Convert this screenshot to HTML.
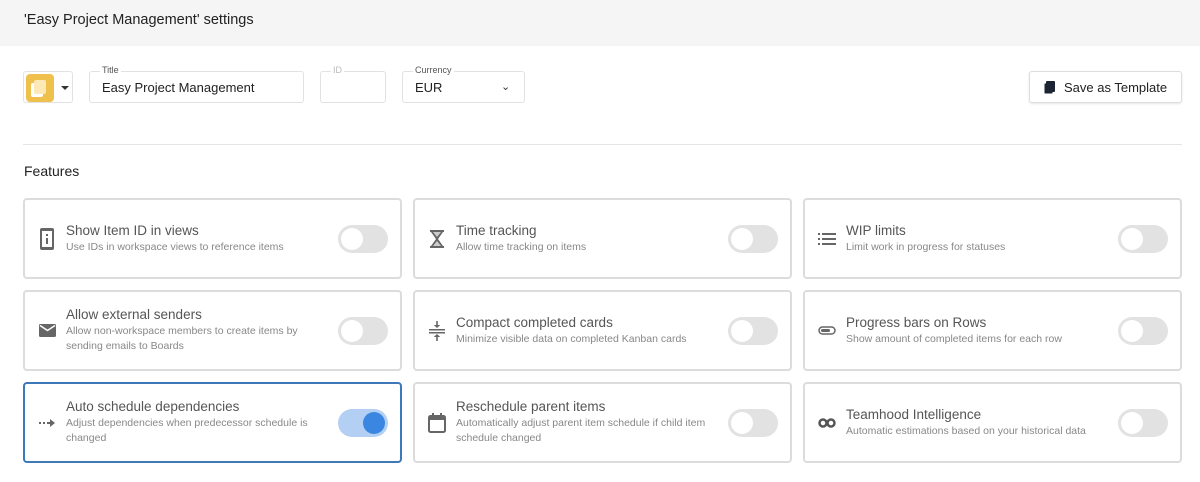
<!DOCTYPE html><html><head><style>
*{box-sizing:border-box;margin:0;padding:0}
body{width:1200px;height:482px;background:#fff;font-family:"Liberation Sans",sans-serif;position:relative;overflow:hidden;color:#333}
.hdr{position:absolute;left:0;top:0;width:1200px;height:46px;background:#f5f5f5;font-size:14.5px;padding:12px 0 0 24px;color:#222}
.box{position:absolute;border:1px solid #e2e2e2;border-radius:3px;background:#fff}
.lbl{position:absolute;top:-7px;font-size:9px;color:#555;background:#fff;padding:0 2px}
.val{position:absolute;font-size:13px;color:#222}
.card{position:absolute;width:379px;height:81px;border:2px solid #dcdcdc;border-radius:4px;background:#fff}
.card.on{border:2px solid #3f78b8}
.ic{position:absolute;left:12px;top:0;bottom:0;width:20px;display:flex;align-items:center;justify-content:center}
.tx{position:absolute;left:41px;right:80px;top:0;bottom:0;display:flex;flex-direction:column;justify-content:center}
.t{font-size:13.5px;color:#555;margin-bottom:2px}
.d{font-size:10.5px;color:#888;line-height:15px}
.tg{position:absolute;right:12px;top:50%;margin-top:-14px;width:50px;height:28px;border-radius:14px;background:#e2e2e2}
.tg::after{content:"";position:absolute;left:3px;top:3px;width:22px;height:22px;border-radius:50%;background:#fff}
.tg.on{background:#b3cff3}.tg.on::after{left:25px;background:#3a86e0}
</style></head><body>
<div class="hdr">'Easy Project Management' settings</div>
<div class="box" style="left:23px;top:71px;width:50px;height:32px"><div style="position:absolute;left:2px;top:2px;width:28px;height:28px;background:#f0c04d;border-radius:4px"><div style="position:absolute;left:8px;top:6px;width:12px;height:14px;background:#fde9b5;border-radius:2px;box-shadow:-3px 3px 0 #fff"></div></div><div style="position:absolute;left:37px;top:14px;border-left:4px solid transparent;border-right:4px solid transparent;border-top:4px solid #333"></div></div>
<div class="box" style="left:89px;top:71px;width:215px;height:32px"><span class="lbl" style="left:10px">Title</span><span class="val" style="left:12px;top:8px">Easy Project Management</span></div>
<div class="box" style="left:320px;top:71px;width:66px;height:32px"><span class="lbl" style="left:10px;color:#bbb">ID</span></div>
<div class="box" style="left:402px;top:71px;width:123px;height:32px"><span class="lbl" style="left:10px">Currency</span><span class="val" style="left:12px;top:8px">EUR</span><span style="position:absolute;left:98px;top:8px;font-size:11px">&#8964;</span></div>
<div class="box" style="left:1029px;top:71px;width:153px;height:32px;border:1.5px solid #ddd;box-shadow:0 1px 2px rgba(0,0,0,.1)"><div style="position:absolute;left:16px;top:9px;width:9px;height:11px;background:#1d2433;border-radius:1px;box-shadow:-2px 2px 0 -0.5px #1d2433"></div><span class="val" style="left:34px;top:8px">Save as Template</span></div>
<div style="position:absolute;left:23px;top:144px;width:1159px;height:1px;background:#e5e5e5"></div>
<div style="position:absolute;left:24px;top:163px;font-size:14px;color:#222">Features</div>

<div class="card" style="left:23px;top:198px"><div class="ic"><svg width="14" height="22" viewBox="0 0 14 22"><rect x="0" y="0" width="14" height="22" rx="2" fill="#666"/><rect x="2" y="3" width="10" height="16" fill="#fff"/><rect x="6" y="10" width="2" height="6" fill="#666"/><rect x="6" y="6" width="2" height="2" fill="#666"/></svg></div><div class="tx"><div class="t">Show Item ID in views</div><div class="d">Use IDs in workspace views to reference items</div></div><div class="tg"></div></div>
<div class="card" style="left:413px;top:198px"><div class="ic"><svg width="14" height="18" viewBox="0 0 14 18"><path d="M0 0h14v2h-1l-5 7 5 7h1v2H0v-2h1l5-7-5-7H0z" fill="#666"/><path d="M3 2h8l-4 5z M3 16l4-5 4 5z" fill="#ccc"/></svg></div><div class="tx"><div class="t">Time tracking</div><div class="d">Allow time tracking on items</div></div><div class="tg"></div></div>
<div class="card" style="left:803px;top:198px"><div class="ic"><svg width="18" height="12" viewBox="0 0 18 12"><g fill="#666"><rect x="0" y="0" width="2" height="2"/><rect x="0" y="5" width="2" height="2"/><rect x="0" y="10" width="2" height="2"/><rect x="4" y="0" width="14" height="2"/><rect x="4" y="5" width="14" height="2"/><rect x="4" y="10" width="14" height="2"/></g></svg></div><div class="tx"><div class="t">WIP limits</div><div class="d">Limit work in progress for statuses</div></div><div class="tg"></div></div>

<div class="card" style="left:23px;top:290px"><div class="ic"><svg width="17" height="13" viewBox="0 0 17 13"><rect width="17" height="13" rx="1.5" fill="#666"/><path d="M1 1.5l7.5 5 7.5-5" stroke="#fff" stroke-width="1.5" fill="none"/></svg></div><div class="tx"><div class="t">Allow external senders</div><div class="d">Allow non-workspace members to create items by sending emails to Boards</div></div><div class="tg"></div></div>
<div class="card" style="left:413px;top:290px"><div class="ic"><svg width="16" height="20" viewBox="0 0 16 20"><g fill="#666"><rect x="0" y="8" width="16" height="1.5"/><rect x="0" y="11" width="16" height="1.5"/><path d="M7.2 0h1.6v4h2.5L8 7 4.7 4h2.5z M8 13l3.3 3H8.8v4H7.2v-4H4.7z"/></g></svg></div><div class="tx"><div class="t">Compact completed cards</div><div class="d">Minimize visible data on completed Kanban cards</div></div><div class="tg"></div></div>
<div class="card" style="left:803px;top:290px"><div class="ic"><svg width="18" height="9" viewBox="0 0 18 9"><rect x="1" y="1" width="16" height="7" rx="3.5" stroke="#666" stroke-width="1.5" fill="none"/><rect x="3" y="3" width="9" height="3" rx="1.5" fill="#666"/></svg></div><div class="tx"><div class="t">Progress bars on Rows</div><div class="d">Show amount of completed items for each row</div></div><div class="tg"></div></div>

<div class="card on" style="left:23px;top:382px"><div class="ic"><svg width="16" height="8" viewBox="0 0 16 8"><g fill="#666"><rect x="0" y="3" width="2" height="2"/><rect x="4" y="3" width="2" height="2"/><rect x="8" y="3" width="4" height="2"/><path d="M11 0l5 4-5 4z"/></g></svg></div><div class="tx"><div class="t">Auto schedule dependencies</div><div class="d">Adjust dependencies when predecessor schedule is changed</div></div><div class="tg on"></div></div>
<div class="card" style="left:413px;top:382px"><div class="ic"><svg width="18" height="20" viewBox="0 0 18 20"><rect x="1" y="3" width="16" height="16" rx="1.5" stroke="#666" stroke-width="2" fill="none"/><rect x="1" y="3" width="16" height="4" fill="#666"/><rect x="4" y="0" width="2" height="4" fill="#666"/><rect x="12" y="0" width="2" height="4" fill="#666"/></svg></div><div class="tx"><div class="t">Reschedule parent items</div><div class="d">Automatically adjust parent item schedule if child item schedule changed</div></div><div class="tg"></div></div>
<div class="card" style="left:803px;top:382px"><div class="ic"><svg width="18" height="10" viewBox="0 0 18 10"><circle cx="5" cy="5" r="3.5" stroke="#555" stroke-width="2.5" fill="none"/><circle cx="13" cy="5" r="3.5" stroke="#555" stroke-width="2.5" fill="none"/></svg></div><div class="tx"><div class="t">Teamhood Intelligence</div><div class="d">Automatic estimations based on your historical data</div></div><div class="tg"></div></div>
</body></html>
